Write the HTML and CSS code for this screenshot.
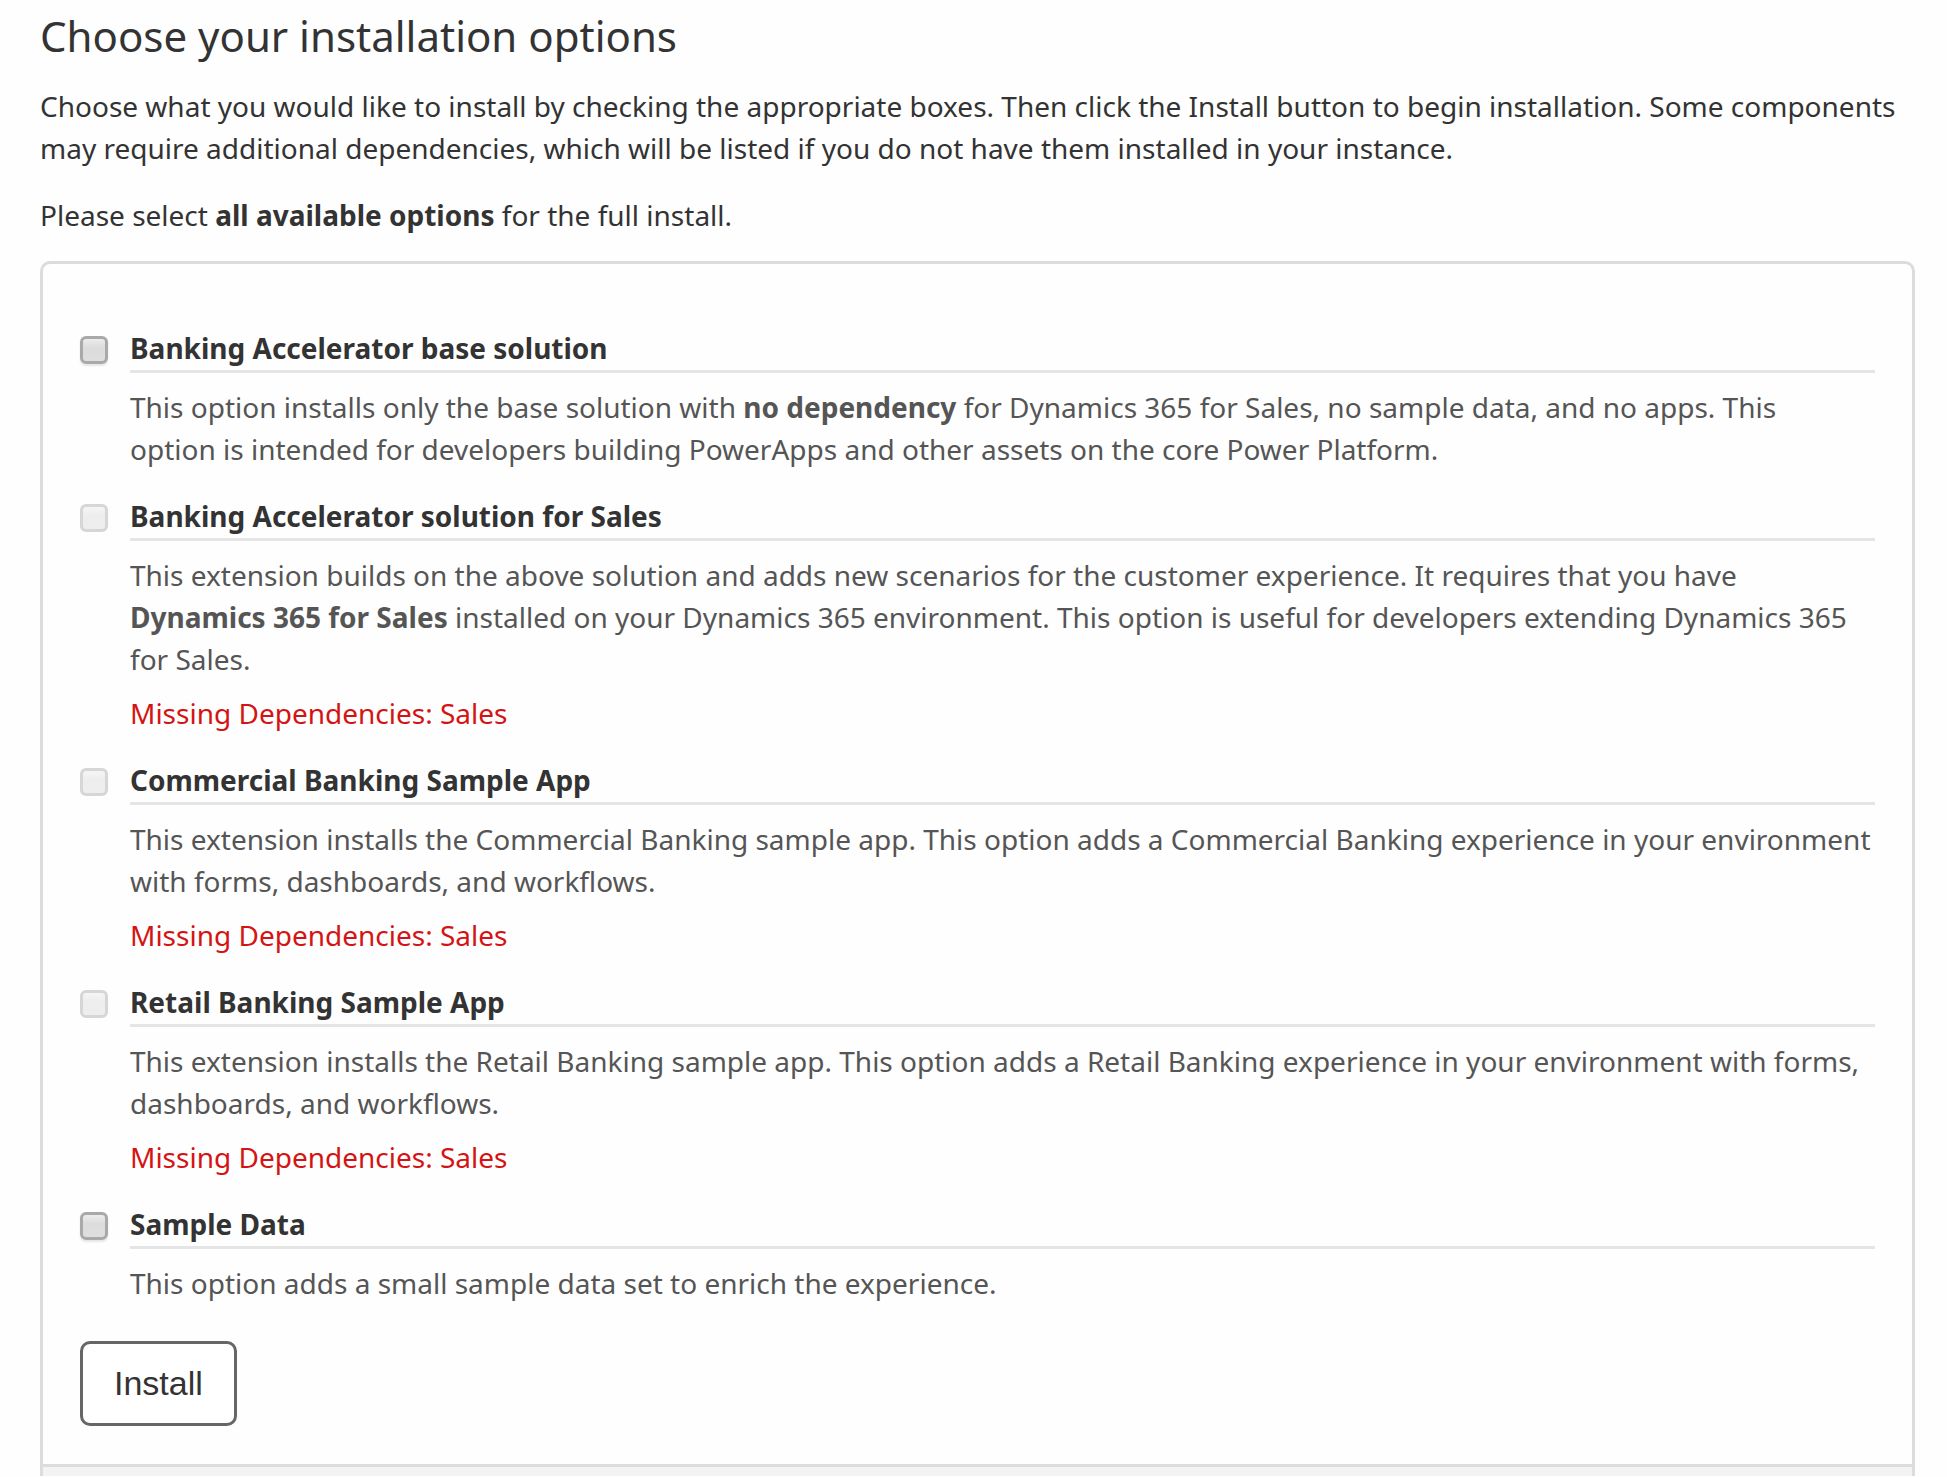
FILE: index.html
```html
<!DOCTYPE html>
<html lang="en">
<head>
<meta charset="utf-8">
<title>Choose your installation options</title>
<link rel="stylesheet" href="styles.css">
</head>
<body>
<main class="page">
  <h1 class="page-title">Choose your installation options</h1>
  <p class="intro">Choose what you would like to install by checking the appropriate boxes. Then click the Install button to begin installation. Some components may require additional dependencies, which will be listed if you do not have them installed in your instance.</p>
  <p class="intro">Please select <strong>all available options</strong> for the full install.</p>

  <form class="card">
    <div class="card-body">
      <div class="options">
        <div class="option">
          <input class="option-check" type="checkbox" id="base">
          <div class="option-content">
            <label class="option-title" for="base">Banking Accelerator base solution</label>
            <p class="option-text">This option installs only the base solution with <strong>no dependency</strong> for Dynamics 365 for Sales, no sample data, and no apps. This<br> option is intended for developers building PowerApps and other assets on the core Power Platform.</p>
          </div>
        </div>
        <div class="option">
          <input class="option-check" type="checkbox" id="sales" disabled>
          <div class="option-content">
            <label class="option-title" for="sales">Banking Accelerator solution for Sales</label>
            <p class="option-text">This extension builds on the above solution and adds new scenarios for the customer experience. It requires that you have <strong>Dynamics 365 for Sales</strong> installed on your Dynamics 365 environment. This option is useful for developers extending Dynamics 365 for Sales.</p>
            <p class="option-error">Missing Dependencies: Sales</p>
          </div>
        </div>
        <div class="option">
          <input class="option-check" type="checkbox" id="commercial" disabled>
          <div class="option-content">
            <label class="option-title" for="commercial">Commercial Banking Sample App</label>
            <p class="option-text">This extension installs the Commercial Banking sample app. This option adds a Commercial Banking experience in your environment with forms, dashboards, and workflows.</p>
            <p class="option-error">Missing Dependencies: Sales</p>
          </div>
        </div>
        <div class="option">
          <input class="option-check" type="checkbox" id="retail" disabled>
          <div class="option-content">
            <label class="option-title" for="retail">Retail Banking Sample App</label>
            <p class="option-text">This extension installs the Retail Banking sample app. This option adds a Retail Banking experience in your environment with forms, dashboards, and workflows.</p>
            <p class="option-error">Missing Dependencies: Sales</p>
          </div>
        </div>
        <div class="option">
          <input class="option-check" type="checkbox" id="sample">
          <div class="option-content">
            <label class="option-title" for="sample">Sample Data</label>
            <p class="option-text">This option adds a small sample data set to enrich the experience.</p>
          </div>
        </div>
      </div>
      <button class="install" type="button">Install</button>
    </div>
    <div class="card-footer"></div>
  </form>
</main>
</body>
</html>
```

FILE: styles.css
```css
* {
  box-sizing: border-box;
}

body {
  margin: 0;
  background: #fefefe;
  color: #333;
  font-family: "Segoe UI", "Noto Sans", sans-serif;
  font-size: 28px;
  line-height: 42px;
}

h1,
p {
  margin: 0;
}

.page {
  padding: 8px 32px 0 40px;
}

.page-title {
  margin-bottom: 21px;
  font-size: 42px;
  font-weight: 400;
  line-height: 56px;
}

.intro {
  margin-bottom: 25px;
}

.card {
  border: 3px solid #dcdcdc;
  border-bottom: 0;
  border-radius: 10px 10px 0 0;
}

.card-body {
  padding: 63px 37px 38px;
}

.options {
  display: flex;
  flex-direction: column;
  gap: 25px;
  margin-bottom: 37px;
}

.option {
  display: flex;
  align-items: flex-start;
  gap: 22px;
}

.option-check {
  appearance: none;
  flex: none;
  width: 28px;
  height: 28px;
  margin: 9px 0 0;
  border: 3px solid #a9a9a9;
  border-radius: 6px;
  background: linear-gradient(#ececec, #dcdcdc 40%, #dedede);
  box-shadow: 0 2px 2px #e6e6e6;
}

.option-check:disabled {
  border-color: #d6d6d6;
  background: linear-gradient(#f5f5f5, #ededed 40%, #eee);
  box-shadow: none;
}

.option-content {
  flex: 1;
  min-width: 0;
}

.option-title {
  display: block;
  margin-bottom: 13px;
  padding-bottom: 1px;
  border-bottom: 3px solid #e5e5e5;
  font-weight: 700;
}

.option-text {
  color: #555;
}

.option-error {
  margin-top: 12px;
  color: #d41414;
}

.install {
  display: block;
  padding: 19px 31px;
  border: 3px solid #666;
  border-radius: 10px;
  background: #fff;
  color: #333;
  font-family: Arial, "Liberation Sans", sans-serif;
  font-size: 34px;
  line-height: 41px;
}

.card-footer {
  height: 12px;
  border-top: 3px solid #dcdcdc;
  background: #f3f3f3;
}
```
